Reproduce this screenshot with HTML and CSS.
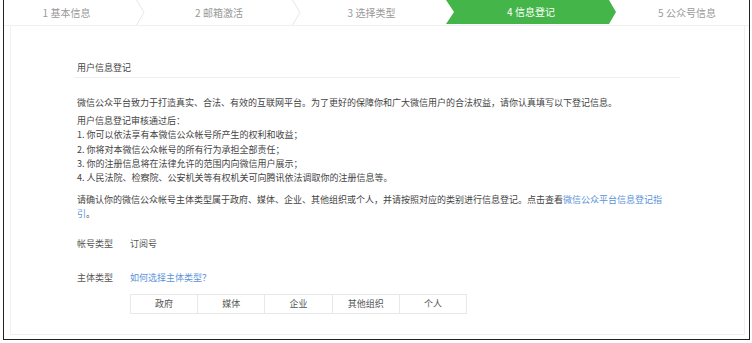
FILE: index.html
```html
<!DOCTYPE html>
<html lang="zh-CN">
<head>
<meta charset="utf-8">
<link rel="stylesheet" href="styles.css">
</head>
<body>
<div class="frame">
  <div class="steps">
    <div class="step s1">1 基本信息<svg class="chev" viewBox="0 0 9 25" width="9" height="25"><polyline points="0.5,0 8,12.5 0.5,25" fill="none" stroke="#e6e6e6" stroke-width="1"/></svg></div>
    <div class="step s2">2 邮箱激活<svg class="chev" viewBox="0 0 9 25" width="9" height="25"><polyline points="0.5,0 8,12.5 0.5,25" fill="none" stroke="#e6e6e6" stroke-width="1"/></svg></div>
    <div class="step s3">3 选择类型</div>
    <div class="step s4 active">4 信息登记</div>
    <div class="step s5">5 公众号信息</div>
  </div>
  <div class="card">
    <div class="content">
      <h2 class="title">用户信息登记</h2>
      <p class="para intro">微信公众平台致力于打造真实、合法、有效的互联网平台。为了更好的保障你和广大微信用户的合法权益，请你认真填写以下登记信息。</p>
      <div class="list">
        <div>用户信息登记审核通过后：</div>
        <div>1. 你可以依法享有本微信公众帐号所产生的权利和收益；</div>
        <div>2. 你将对本微信公众帐号的所有行为承担全部责任；</div>
        <div>3. 你的注册信息将在法律允许的范围内向微信用户展示；</div>
        <div>4. 人民法院、检察院、公安机关等有权机关可向腾讯依法调取你的注册信息等。</div>
      </div>
      <p class="para confirm">请确认你的微信公众帐号主体类型属于政府、媒体、企业、其他组织或个人，并请按照对应的类别进行信息登记。点击查看<a class="link">微信公众平台信息登记指引</a>。</p>
      <div class="row row1">
        <span class="label">帐号类型</span>
        <span class="value">订阅号</span>
      </div>
      <div class="row row2">
        <span class="label">主体类型</span>
        <a class="link">如何选择主体类型？</a>
      </div>
      <div class="types">
        <div class="type">政府</div>
        <div class="type">媒体</div>
        <div class="type">企业</div>
        <div class="type">其他组织</div>
        <div class="type">个人</div>
      </div>
    </div>
  </div>
</div>
</body>
</html>
```
FILE: styles.css
```css
* { box-sizing: border-box; }
html, body { margin: 0; padding: 0; background: #fff; }
body {
  font-family: "Noto Sans CJK SC", "Noto Sans", sans-serif;
  font-size: 9px;
  color: #444;
}
.frame {
  margin-left: 3px;
  width: 747px;
  height: 340px;
  border-left: 1px solid #222;
  border-right: 1px solid #222;
  border-bottom: 1px solid #222;
  display: flex;
  flex-direction: column;
}
.steps {
  display: flex;
  height: 26px;
  border-bottom: 1px solid #f0f0f0;
  flex: none;
}
.step {
  position: relative;
  height: 25px;
  line-height: 25px;
  text-align: center;
  font-size: 10px;
  color: #999;
  flex: none;
}
.chev { position: absolute; right: -4px; top: 0; }
.s1 { width: 137px; padding-right: 12px; }
.s2 { width: 156px; }
.s3 { width: 149px; }
.s4 { width: 170px; }
.s5 { width: 132px; padding-left: 10px; }
.active {
  background: #44b549;
  color: #fff;
  height: 24px;
  line-height: 24px;
  clip-path: polygon(0 0, 163px 0, 170px 50%, 163px 100%, 0 100%, 8px 50%);
}
.card {
  flex: 1;
  margin: 0 4px 4px 6px;
  border: 1px solid #f0f0f0;
  border-top: none;
}
.content {
  padding: 35px 0 0 66px;
  width: 656px;
}
.title {
  margin: 0;
  font-size: 9px;
  font-weight: normal;
  line-height: 14px;
  padding-bottom: 2px;
  border-bottom: 1px solid #eeeeee;
  width: 605px;
  margin-left: -2px;
  padding-left: 2px;
}
.para { margin: 0; line-height: 14px; }
.intro { margin-top: 18px; }
.list { margin-top: 4px; line-height: 14.3px; }
.confirm { margin-top: 8px; line-height: 14px; width: 590px; }
.link { color: #5b93d8; text-decoration: none; }
.row { display: flex; line-height: 14px; }
.row1 { margin-top: 16px; }
.row2 { margin-top: 20px; }
.label { width: 53px; color: #555; }
.value { color: #555; }
.types {
  display: flex;
  margin: 9px 0 0 53px;
  width: 337px;
  height: 20px;
  border: 1px solid #e8e8e8;
}
.type {
  flex: 1;
  text-align: center;
  line-height: 18px;
  color: #555;
  border-right: 1px solid #e8e8e8;
}
.type:last-child { border-right: none; }
```
